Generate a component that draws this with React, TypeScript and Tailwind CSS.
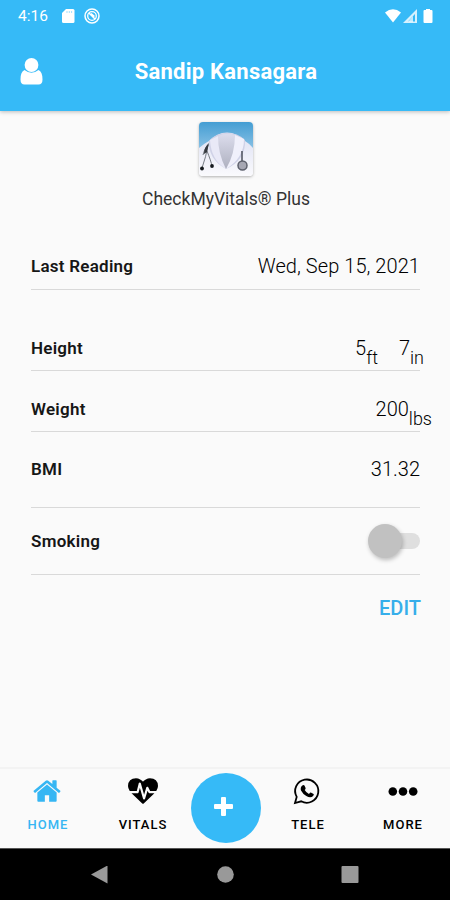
import React from 'react';

interface RowProps {
  label: string;
  className: string;
  children: React.ReactNode;
}

const StatusBar: React.FC = () => (
  <div className="flex h-8 items-center pl-[18px] pr-4 text-white">
    <span className="w-[43px] text-[15.500px] leading-8">4:16</span>
    <svg className="mr-[9px] h-[16px] w-[14px]" viewBox="0 0 14 16" fill="currentColor">
      <path d="M5 1h7a1.500 1.500 0 0 1 1.500 1.500v11A1.500 1.500 0 0 1 12 15H2.500A1.500 1.500 0 0 1 1 13.500V5z" />
      <path d="M6 3v2M8.300 3v2M10.600 3v2" stroke="#7dd3fb" strokeWidth="0.700" />
    </svg>
    <svg className="h-[16px] w-[16px]" viewBox="0 0 16 16" fill="none" stroke="currentColor">
      <circle cx="8" cy="8" r="7" strokeWidth="1.500" />
      <circle cx="8" cy="8" r="4.300" strokeWidth="1.300" />
      <path d="M5 5l6 6M7 5.500l3.500 3" strokeWidth="1.500" />
    </svg>
    <svg className="ml-auto h-[16px] w-[50px]" viewBox="0 0 50 16" fill="currentColor">
      <path d="M1 4.500Q9-2 17 4.500L9 14.500z" />
      <path d="M33 1v14H19z" opacity=".8" />
      <path d="M31 6v7.500H24z" fill="#36baf7" />
      <path d="M29 8v6h-5z" opacity=".7" />
      <path d="M42 1h4v1h1.500q1 0 1 1v11q0 1-1 1h-7q-1 0-1-1V3q0-1 1-1H42z" />
    </svg>
  </div>
);

const AppLogo: React.FC = () => (
  <svg className="ml-[2px] h-[54px] w-[54px] rounded-[4px] shadow-[0_1px_3px_rgba(0,0,0,0.3)]" viewBox="0 0 54 54">
    <defs>
      <linearGradient id="sky" x1="0" y1="0" x2="0" y2="1">
        <stop offset="0" stopColor="#439dd3" />
        <stop offset=".45" stopColor="#83bee3" />
        <stop offset="1" stopColor="#fff" />
      </linearGradient>
      <linearGradient id="coat" x1="0" y1="0" x2="0" y2="1">
        <stop offset="0" stopColor="#dde0f3" />
        <stop offset="1" stopColor="#fafafd" />
      </linearGradient>
      <linearGradient id="lapel" x1="0" y1="0" x2="0" y2="1">
        <stop offset="0" stopColor="#dcdded" />
        <stop offset="1" stopColor="#aeb0bf" />
      </linearGradient>
    </defs>
    <path d="M0 0h54v54H0z" fill="url(#sky)" />
    <path d="M0 26Q6 21 10 19 18 10.500 28 10.500T46 19q5 3 8 7v28H0z" fill="url(#coat)" />
    <path d="M10 19Q17 11 28 11t18 7q1 20-19 29Q9 37 10 19z" fill="#d0d2e7" />
    <path d="M11 18l8-4 8 33Q12 38 11 18z" fill="#e9e9f7" />
    <path d="M36 13l9 4q0 19-18 30z" fill="#f0f0fb" />
    <path d="M19 14q8-4 17-1 0 19-9 34-8-15-8-33z" fill="url(#lapel)" />
    <path d="M9 23q-4 4-5 10M9 23q-2 12-6 23M8 29q4 10 5 15" fill="none" stroke="#777c85" strokeWidth="1" />
    <path d="M10 21q-5 4-5 11l3-2z" fill="#34383f" />
    <circle cx="3" cy="46.500" r="1.900" fill="#15191e" />
    <circle cx="13" cy="44" r="1.900" fill="#15191e" />
    <path d="M43 29v10" stroke="#4b4f5b" strokeWidth="1.500" />
    <circle cx="43.500" cy="43.500" r="4.500" fill="#a6a7b3" stroke="#5d606c" strokeWidth="1.500" />
  </svg>
);

const Row: React.FC<RowProps> = ({ label, className, children }) => (
  <div className={`flex justify-between border-b-[1.500px] border-[#d9d9d9] ${className}`}>
    <span className="text-[17px] font-semibold leading-6 tracking-[0.250px] text-[#161616]">{label}</span>
    <span className="flex whitespace-nowrap text-[20px] font-light leading-6 text-black">{children}</span>
  </div>
);

export default function App() {
  return (
    <div className="flex h-[900px] w-[450px] flex-col overflow-hidden bg-[#fafafa] font-['Roboto',sans-serif] text-black">
      <header className="h-[111px] shrink-0 bg-[#36baf7] text-white shadow-[0_1px_4px_rgba(0,0,0,0.25)]">
        <StatusBar />
        <div className="grid h-[79px] grid-cols-[52px_1fr_52px] items-center">
          <svg className="ml-5 h-[27px] w-[23px]" viewBox="0 0 23 27" fill="currentColor">
            <path d="M4.500 12Q8 14.800 11.500 14.800T18.500 12q4 1.500 4 9.500 0 5-4 5h-14q-4 0-4-5Q.5 13.500 4.500 12z" />
            <circle cx="11.500" cy="7" r="6.900" />
          </svg>
          <h1 className="pl-[2px] text-center text-[22px] font-bold tracking-[0.250px]">Sandip Kansagara</h1>
        </div>
      </header>

      <main className="flex flex-1 flex-col pt-[11px]">
        <div className="flex flex-col items-center">
          <AppLogo />
          <p className="mt-[11px] pl-[2px] text-[17.500px] leading-6 text-[#333]">CheckMyVitals® Plus</p>
        </div>

        <div className="ml-[31px] mr-[30px] mt-[43px] flex flex-col">
          <Row label="Last Reading" className="h-9">
            <span className="tracking-[0.060px]">Wed, Sep 15, 2021</span>
          </Row>
          <Row label="Height" className="mt-[46px] h-[35px]">
            <span>5</span>
            <span className="mr-[21px] mt-[10px] text-[18px]">ft</span>
            <span>7</span>
            <span className="-mr-[4px] mt-[10px] text-[18px]">in</span>
          </Row>
          <Row label="Weight" className="mt-[26px] h-[35px]">
            <span>200</span>
            <span className="-mr-3 mt-[10px] text-[18px]">lbs</span>
          </Row>
          <Row label="BMI" className="mt-[25px] h-[51px]">
            <span>31.32</span>
          </Row>
          <Row label="Smoking" className="h-[67px] pt-[21px]">
            <button className="mt-1 flex h-4 w-[52px] items-center" role="switch" aria-checked="false">
              <span className="z-10 h-[34px] w-[34px] shrink-0 rounded-full bg-[#c1c1c1] shadow-[1px_2px_4px_rgba(0,0,0,0.25)]" />
              <span className="-ml-[18px] h-4 w-9 rounded-full bg-[#dfdfdf]" />
            </button>
          </Row>
          <button className="-mr-px mt-[21px] self-end text-[20px] font-medium leading-6 text-[#36aeea]">EDIT</button>
        </div>
      </main>

      <nav className="grid h-[81px] shrink-0 grid-cols-[95px_96px_70px_94px_95px] border-t-2 border-[#f3f3f3] text-[13px] font-medium tracking-[1px]">
        <div className="flex flex-col items-center pl-[1px] pt-[7px] text-[#36b6f3]">
          <svg className="mr-[2px] h-[30px] w-[30px]" viewBox="0 0 1664 1792" fill="currentColor">
            <path d="M1408 992v480q0 26-19 45t-45 19H960v-384H704v384H320q-26 0-45-19t-19-45V992q0-1 .5-3t.5-3l575-474 575 474q1 2 1 6zm223-69l-62 74q-8 9-21 11h-3q-13 0-21-7L832 424l-692 577q-12 8-24 7-13-2-21-11l-62-74q-8-10-7-23.500T37 878L756 279q32-26 76-26t76 26l244 204V288q0-14 9-23t23-9h192q14 0 23 9t9 23v408l219 182q10 8 11 21.500t-7 23.500z" />
          </svg>
          <span className="mt-[9px] leading-5">HOME</span>
        </div>
        <div className="flex flex-col items-center pt-[7px]">
          <svg className="h-[30px] w-[30px]" viewBox="0 0 1792 1792" fill="currentColor">
            <path d="M1280 1024h305q-5 6-10 10.500t-9 7.500l-3 4-623 600q-18 18-44 18t-44-18l-624-602q-5-2-21-20h369q22 0 39.500-13.500t22.500-34.500l70-281 190 667q6 20 23 33t39 13q21 0 38-13t23-33l146-485 56 112q18 35 57 35zm512-428q0 145-103 300h-369l-111-221q-8-17-25.500-27t-36.500-8q-45 5-56 46l-129 430-196-686q-6-20-23.500-33t-39.500-13-39 13.500-22 34.500l-116 464H103Q0 741 0 596q0-220 127-344t351-124q62 0 126.500 21.500t120 58T820 276t76 68q36-36 76-68t95.500-68.500 120-58T1314 128q224 0 351 124t127 344z" />
          </svg>
          <span className="mt-[9px] leading-5">VITALS</span>
        </div>
        <button className="mt-[4px] flex h-[70px] w-[70px] items-center justify-center rounded-full bg-[#36baf7] text-white">
          <svg className="-ml-[5px] -mt-[4px] h-[19px] w-[19px]" viewBox="0 0 19 19" fill="currentColor">
            <path d="M8 0h3q1 0 1 1v6h6q1 0 1 1v3q0 1-1 1h-6v6q0 1-1 1H8q-1 0-1-1v-6H1q-1 0-1-1V8q0-1 1-1h6V1q0-1 1-1z" />
          </svg>
        </button>
        <div className="flex flex-col items-center pt-[7px]">
          <svg className="mr-[3px] h-[30px] w-[30px]" viewBox="0 0 30 30" fill="none" stroke="currentColor">
            <path d="M4.700 20.900A11.600 11.600 0 1 1 9.200 25.300L3 27z" strokeWidth="1.800" />
            <path
              d="M10.300 9.500q1.500-1.300 2.300.3l1 2.300q.3.800-.9 1.900 1.700 3 4.300 3.900 1.300-1.500 1.800-1.300l2.800 1.400q.7.500-.5 2.100-2.500 2.500-6.800 0-3.500-2-5.300-5.500-1-3 1.300-5.100z"
              fill="currentColor"
              stroke="none"
            />
          </svg>
          <span className="mt-[9px] leading-5">TELE</span>
        </div>
        <div className="flex flex-col items-center pl-[1px] pt-[7px]">
          <svg className="h-[30px] w-[30px]" viewBox="0 0 30 30" fill="currentColor">
            <circle cx="4.800" cy="15.500" r="4.300" />
            <circle cx="15" cy="15.500" r="4.300" />
            <circle cx="25.200" cy="15.500" r="4.300" />
          </svg>
          <span className="mt-[9px] leading-5">MORE</span>
        </div>
      </nav>

      <div className="flex h-[52px] shrink-0 items-center justify-center border-t border-[#555] bg-black">
        <svg className="h-[18px] w-[270px]" viewBox="0 0 270 18" fill="#999">
          <path d="M1 8.500L17.500-.5v18z" />
          <circle cx="135.500" cy="8.500" r="8.300" />
          <rect x="251.500" width="17" height="17" rx="1" />
        </svg>
      </div>
    </div>
  );
}
